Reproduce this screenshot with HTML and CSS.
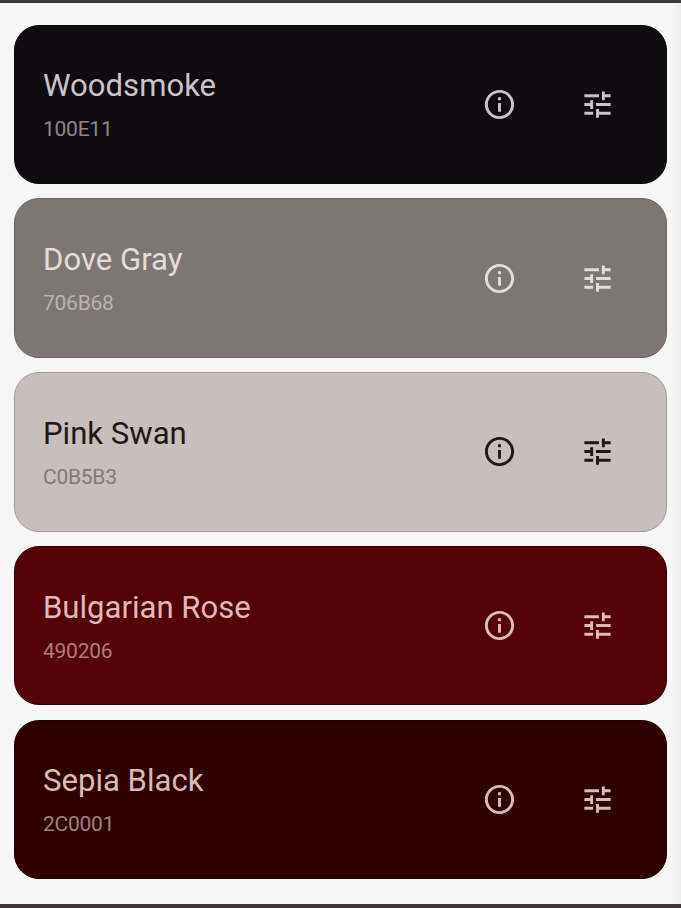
FILE: index.html
```html
<!DOCTYPE html>
<html lang="en">
<head>
<meta charset="utf-8">
<title>Palette</title>
<link rel="stylesheet" href="styles.css">
</head>
<body>
<svg class="symbols" aria-hidden="true">
  <symbol id="info" viewBox="0 0 24 24"><path d="M11 7h2v2h-2zm0 4h2v6h-2zm1-9C6.48 2 2 6.48 2 12s4.480 10 10 10 10-4.480 10-10S17.520 2 12 2zm0 18c-4.410 0-8-3.590-8-8s3.590-8 8-8 8 3.590 8 8-3.590 8-8 8z"/></symbol>
  <symbol id="tune" viewBox="0 0 24 24"><path d="M3 17v2h6v-2H3zM3 5v2h10V5H3zm10 16v-2h8v-2h-8v-2h-2v6h2zM7 9v2H3v2h4v2h2V9H7zm14 4v-2H11v2h10zm-6-4h2V7h4V5h-4V3h-2v6z"/></symbol>
</svg>
<main class="palette">
  <article class="card woodsmoke">
    <div class="label"><h2 class="name">Woodsmoke</h2><p class="hex">100E11</p></div>
    <svg class="icon"><use href="#info"/></svg>
    <svg class="icon"><use href="#tune"/></svg>
  </article>
  <article class="card dove">
    <div class="label"><h2 class="name">Dove Gray</h2><p class="hex">706B68</p></div>
    <svg class="icon"><use href="#info"/></svg>
    <svg class="icon"><use href="#tune"/></svg>
  </article>
  <article class="card swan">
    <div class="label"><h2 class="name">Pink Swan</h2><p class="hex">C0B5B3</p></div>
    <svg class="icon"><use href="#info"/></svg>
    <svg class="icon"><use href="#tune"/></svg>
  </article>
  <article class="card rose">
    <div class="label"><h2 class="name">Bulgarian Rose</h2><p class="hex">490206</p></div>
    <svg class="icon"><use href="#info"/></svg>
    <svg class="icon"><use href="#tune"/></svg>
  </article>
  <article class="card sepia">
    <div class="label"><h2 class="name">Sepia Black</h2><p class="hex">2C0001</p></div>
    <svg class="icon"><use href="#info"/></svg>
    <svg class="icon"><use href="#tune"/></svg>
  </article>
</main>
</body>
</html>
```
FILE: styles.css
```css
* { box-sizing: border-box; }

body {
  margin: 0;
  font-family: Roboto, "Liberation Sans", sans-serif;
}

.symbols { display: none; }

.palette {
  height: 908px;
  padding: 21.7px 14px 0;
  border-top: 3px solid #3c3a3b;
  border-bottom: 4px solid #43363a;
  background: linear-gradient(to right, #f6f6f6 672px, #ededed 681px);
  display: flex;
  flex-direction: column;
  gap: 14.25px;
}

.card {
  flex: none;
  height: 159.5px;
  padding: 0 51.5px 0 28px;
  border: 1px solid var(--edge);
  border-radius: 25px;
  background: var(--fill);
  color: var(--ink);
  display: flex;
  align-items: center;
  gap: 62.5px;
}

.label { flex: 1; }

.name {
  margin: 0;
  padding-top: 6px;
  font-size: 31.1px;
  line-height: 44px;
  font-weight: 400;
}

.hex {
  margin: 0;
  font-size: 21px;
  line-height: 42px;
  letter-spacing: -0.25px;
  color: var(--muted);
}

.icon {
  width: 35px;
  height: 35px;
  fill: currentColor;
}

.woodsmoke { --fill: #100b0f; --edge: #0c080b; --ink: #c9c4c8; --muted: #8d888c; }
.dove { --fill: #7d7673; --edge: #686361; --ink: #e2dcda; --muted: #bbb3b0; }
.swan { --fill: #c8bebb; --edge: #a39a98; --ink: #211716; --muted: #837a78; }
.rose { --fill: #530206; --edge: #2d0103; --ink: #e0b9ba; --muted: #b17d7f; }
.sepia { --fill: #300001; --edge: #200001; --ink: #d7bbbb; --muted: #a07f7f; }
```
